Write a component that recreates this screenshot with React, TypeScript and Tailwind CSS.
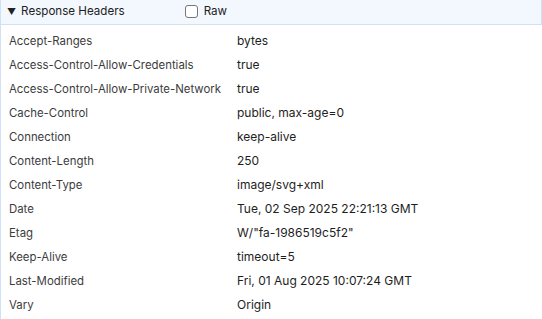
import React from 'react';

const headers: [string, string][] = [
  ['Accept-Ranges', 'bytes'],
  ['Access-Control-Allow-Credentials', 'true'],
  ['Access-Control-Allow-Private-Network', 'true'],
  ['Cache-Control', 'public, max-age=0'],
  ['Connection', 'keep-alive'],
  ['Content-Length', '250'],
  ['Content-Type', 'image/svg+xml'],
  ['Date', 'Tue, 02 Sep 2025 22:21:13 GMT'],
  ['Etag', 'W/"fa-1986519c5f2"'],
  ['Keep-Alive', 'timeout=5'],
  ['Last-Modified', 'Fri, 01 Aug 2025 10:07:24 GMT'],
  ['Vary', 'Origin'],
];

export default function App() {
  return (
    <div className="w-[542px] h-[319px] overflow-hidden bg-white border-l border-[#cfe0f7] font-['Inter',sans-serif] text-[12px]">
      <div className="h-[25px] flex items-center bg-[#f3f8fe] border-b border-[#cfe0f7] border-r">
        <span className="ml-[6px] text-[9px] text-[#222]">▼</span>
        <span className="ml-[5px] text-[11.6px] text-[#222]">Response Headers</span>
        <label className="ml-[60px] flex items-center gap-[6px] text-[11.6px] text-[#222]">
          <span className="w-[13px] h-[13px] rounded-[3px] border border-[#767676] bg-white" />
          Raw
        </label>
      </div>
      <div className="pt-[4px]">
        {headers.map(([k, v]) => (
          <div key={k} className="h-[24px] leading-[24px] flex items-baseline">
            <span className="w-[236px] pl-[8px] text-[11.4px] text-[#3c3c3c] shrink-0">{k}</span>
            <span className="text-[#1e1e1e]">{v}</span>
          </div>
        ))}
      </div>
    </div>
  );
}
